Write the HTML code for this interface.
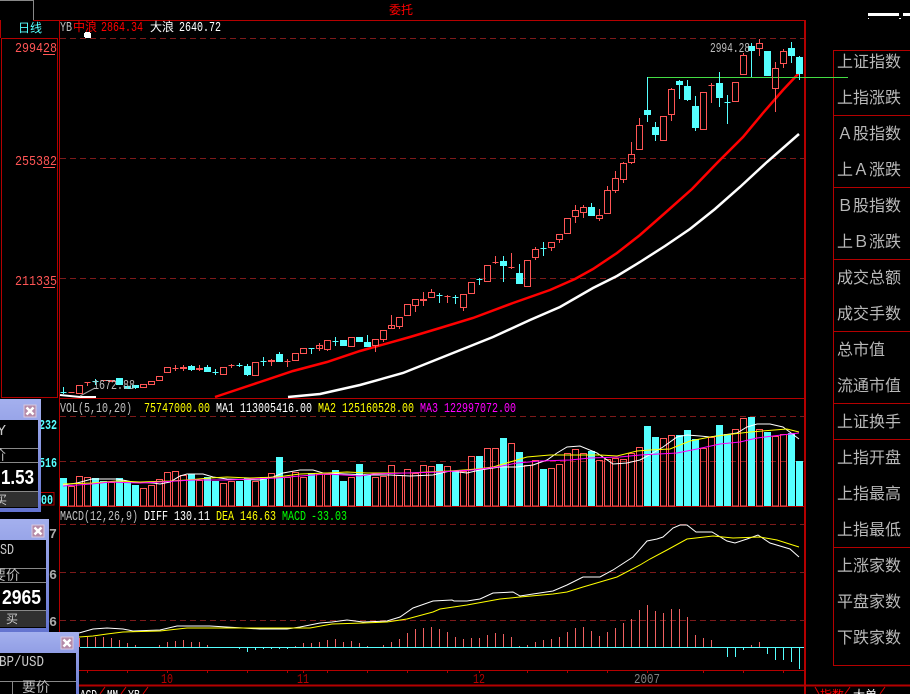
<!DOCTYPE html>
<html><head><meta charset="utf-8"><style>
html,body{margin:0;padding:0;background:#000;width:910px;height:694px;overflow:hidden}
svg{display:block}
text{font-family:"Liberation Mono",monospace;font-size:14px}
.c{font-family:"WenQuanYi Zen Hei","Liberation Sans","Noto Sans CJK SC",sans-serif}
.p{font-family:"WenQuanYi Zen Hei","Liberation Sans","Noto Sans CJK SC",sans-serif;font-size:16px;fill:#b8b8b8}
</style></head><body>
<svg width="910" height="694" viewBox="0 0 910 694" xmlns="http://www.w3.org/2000/svg">
<defs><linearGradient id="g" x1="0" y1="0" x2="0" y2="1"><stop offset="0" stop-color="#a4b0ee"/><stop offset="1" stop-color="#6474d0"/></linearGradient></defs>
<rect width="910" height="694" fill="#000"/>
<g fill="none" stroke="#b40000" shape-rendering="crispEdges">
<path d="M0 .5H33.5V20" stroke="#888"/>
<path d="M33 20.5H806M59.5 20V670M60 398.5H806M60 506.5H806M60 670.5H806M.5 20V38"/>
<path d="M805 20V694" stroke-width="2"/><path d="M0 685.5H910" stroke-width="2"/>
<rect x="1.5" y="38.5" width="56" height="359"/>
<path d="M833.5 50V665.5H910M833 50.5H910M833 115.5H910M833 187.5H910M833 259.5H910M833 331.5H910M833 403.5H910M833 439.5H910M833 547.5H910"/>
<path d="M87.5 671v2M127.5 671v2M167.5 671v2M207.5 671v2M247.5 671v2M287.5 671v2M303.5 671v2M327.5 671v2M367.5 671v2M407.5 671v2M447.5 671v2M479.5 671v2M527.5 671v2M567.5 671v2M607.5 671v2M647.5 671v2M703.5 671v2M743.5 671v2M783.5 671v2"/>
</g>
<g stroke="#7d1a1a" stroke-dasharray="6 4" shape-rendering="crispEdges">
<path d="M60 38.5H805M60 158.5H805M60 278.5H805M60 416.5H805M60 461.5H805M60 524.5H805M60 572.5H805M60 620.5H805"/>
</g>
<!-- MA lines main -->
<polyline fill="none" stroke="#fff" stroke-width="2.5" points="288,397 320,394 360,385 403,373 443,357 493,337 530,320 560,307 593,288 617,276 640,262 665,246 690,229 715,209 740,187 767,162 799,134"/>
<polyline fill="none" stroke="#fff" stroke-width="2" points="60,395 80,397 96,397"/>
<polyline fill="none" stroke="#f00" stroke-width="2.5" points="215,397 260,382 293,371 327,362 360,351 410,337 440,328 473,318 513,303 550,290 575,279 593,269 617,253 640,235 665,213 692,189 717,163 743,137 763,113 783,90 799,73"/>
<path d="M647 77.5H848" stroke="#44dd44" shape-rendering="crispEdges"/>
<path d="M80 396L95 388" stroke="#999" fill="none"/>
<!-- red candles -->
<path fill="none" stroke="#ff5555" shape-rendering="crispEdges" d="M68.5 392.5h6M76.5 385.5h6v8h-6zM84.5 382.5h6M87.5 382v4M100.5 380.5h6M108.5 380.5h6v1h-6zM140.5 384.5h6v3h-6zM148.5 381.5h6v3h-6zM156.5 376.5h6v4h-6zM164.5 367.5h6v5h-6zM172.5 368.5h6M175.5 365v6M180.5 367.5h6v1h-6zM183.5 365v6M196.5 368.5h6v1h-6zM199.5 365v6M220.5 367.5h6v7h-6zM228.5 365.5h6M231.5 364v4M252.5 362.5h6v13h-6zM268.5 360.5h6v1h-6zM271.5 359v7M284.5 361.5h6M287.5 359v8M292.5 353.5h6v7h-6zM300.5 348.5h6v5h-6zM303.5 353v1M316.5 345.5h6v3h-6zM319.5 343v8M324.5 340.5h6v9h-6zM327.5 349v2M348.5 337.5h6v9h-6zM372.5 339.5h6v6h-6zM375.5 345v7M380.5 330.5h6v9h-6zM383.5 339v3M388.5 325.5h6v3h-6zM391.5 315v14M396.5 317.5h6v9h-6zM399.5 326v3M404.5 304.5h6v11h-6zM412.5 299.5h6v6h-6zM415.5 305v7M420.5 299.5h6v1h-6zM423.5 292v14M428.5 292.5h6v5h-6zM431.5 289v3M444.5 296.5h6M447.5 295v8M460.5 294.5h6v13h-6zM463.5 307v4M468.5 282.5h6v11h-6zM484.5 265.5h6v16h-6zM492.5 262.5h6M495.5 256v8M508.5 267.5h6M511.5 253v16M524.5 260.5h6v26h-6zM532.5 249.5h6v8h-6zM535.5 247v2M535.5 257v3M548.5 242.5h6v5h-6zM551.5 247v4M556.5 234.5h6v5h-6zM559.5 239v4M564.5 218.5h6v15h-6zM572.5 210.5h6v6h-6zM575.5 205v5M575.5 216v7M580.5 207.5h6v5h-6zM583.5 205v2M583.5 212v6M596.5 215.5h6v3h-6zM599.5 209v6M599.5 218v3M604.5 190.5h6v23h-6zM607.5 186v4M612.5 178.5h6v12h-6zM615.5 171v7M615.5 190v3M620.5 163.5h6v16h-6zM623.5 162v1M623.5 179v4M628.5 154.5h6v8h-6zM631.5 142v12M631.5 162v2M636.5 125.5h6v24h-6zM639.5 118v7M660.5 116.5h6v24h-6zM668.5 89.5h6v25h-6zM671.5 88v1M671.5 114v7M700.5 92.5h6v37h-6zM708.5 85.5h6M711.5 83v20M732.5 82.5h6v19h-6zM740.5 55.5h6v19h-6zM743.5 53v2M756.5 43.5h6v5h-6zM759.5 39v4M759.5 48v8M772.5 68.5h6v20h-6zM775.5 62v6M775.5 88v24M780.5 51.5h6v12h-6zM783.5 49v2M783.5 63v5"/>
<!-- cyan candles -->
<path fill="#55ffff" stroke="#55ffff" shape-rendering="crispEdges" d="M60.5 392.5h6M63.5 387v7M92.5 381.5h6M95.5 379v6M116.5 378.5h6v6h-6zM124.5 386.5h6v2h-6zM132.5 385.5h6v2h-6zM135.5 385v4M188.5 366.5h6v3h-6zM191.5 365v6M204.5 367.5h6v4h-6zM207.5 365v7M212.5 372.5h6M215.5 369v6M236.5 365.5h6M239.5 363v4M244.5 366.5h6v8h-6zM247.5 364v12M260.5 361.5h6M263.5 357v9M276.5 354.5h6v7h-6zM279.5 352v10M308.5 348.5h6M311.5 348v6M332.5 341.5h6M335.5 337v9M340.5 340.5h6v5h-6zM343.5 340v6M356.5 337.5h6v4h-6zM364.5 342.5h6v4h-6zM367.5 335v12M436.5 295.5h6M439.5 293v10M452.5 297.5h6M455.5 295v9M476.5 279.5h6M479.5 278v7M500.5 261.5h6v4h-6zM503.5 256v26M516.5 273.5h6v10h-6zM519.5 264v20M540.5 248.5h6M543.5 242v14M588.5 207.5h6v8h-6zM591.5 203v13M644.5 110.5h6v4h-6zM647.5 77v45M652.5 127.5h6v7h-6zM655.5 122v19M676.5 81.5h6v3h-6zM679.5 80v19M684.5 86.5h6v13h-6zM687.5 80v21M692.5 106.5h6v21h-6zM695.5 96v35M716.5 83.5h6v14h-6zM719.5 72v35M724.5 102.5h6M727.5 95v29M748.5 46.5h6v4h-6zM751.5 43v34M764.5 51.5h6v24h-6zM788.5 48.5h6v7h-6zM791.5 42v21M796.5 57.5h6v16h-6zM799.5 56v24"/>
<!-- volume bars -->
<path fill="none" stroke="#ff5555" shape-rendering="crispEdges" d="M68.5 486.5h6V506h-6zM76.5 476.5h6V506h-6zM84.5 477.5h6V506h-6zM108.5 482.5h6V506h-6zM140.5 488.5h6V506h-6zM148.5 485.5h6V506h-6zM156.5 479.5h6V506h-6zM164.5 472.5h6V506h-6zM172.5 471.5h6V506h-6zM180.5 475.5h6V506h-6zM196.5 480.5h6V506h-6zM220.5 483.5h6V506h-6zM228.5 481.5h6V506h-6zM252.5 481.5h6V506h-6zM268.5 473.5h6V506h-6zM284.5 477.5h6V506h-6zM292.5 472.5h6V506h-6zM300.5 477.5h6V506h-6zM316.5 474.5h6V506h-6zM324.5 474.5h6V506h-6zM348.5 477.5h6V506h-6zM372.5 477.5h6V506h-6zM380.5 476.5h6V506h-6zM388.5 465.5h6V506h-6zM396.5 475.5h6V506h-6zM404.5 469.5h6V506h-6zM412.5 473.5h6V506h-6zM420.5 465.5h6V506h-6zM428.5 466.5h6V506h-6zM444.5 466.5h6V506h-6zM460.5 471.5h6V506h-6zM468.5 456.5h6V506h-6zM484.5 448.5h6V506h-6zM492.5 448.5h6V506h-6zM508.5 443.5h6V506h-6zM524.5 465.5h6V506h-6zM532.5 460.5h6V506h-6zM548.5 468.5h6V506h-6zM556.5 464.5h6V506h-6zM564.5 453.5h6V506h-6zM572.5 449.5h6V506h-6zM580.5 453.5h6V506h-6zM596.5 460.5h6V506h-6zM604.5 459.5h6V506h-6zM612.5 458.5h6V506h-6zM620.5 459.5h6V506h-6zM628.5 453.5h6V506h-6zM636.5 447.5h6V506h-6zM660.5 438.5h6V506h-6zM668.5 435.5h6V506h-6zM700.5 448.5h6V506h-6zM708.5 437.5h6V506h-6zM732.5 429.5h6V506h-6zM740.5 418.5h6V506h-6zM756.5 429.5h6V506h-6zM772.5 436.5h6V506h-6zM780.5 434.5h6V506h-6z"/>
<path fill="none" stroke="#55ffff" stroke-width="7" shape-rendering="crispEdges" d="M63.5 478V506M95.5 478V506M103.5 481V506M119.5 478V506M127.5 482V506M135.5 485V506M191.5 474V506M207.5 477V506M215.5 481V506M239.5 481V506M247.5 478V506M263.5 477V506M279.5 457V506M311.5 473V506M335.5 470V506M343.5 481V506M359.5 464V506M367.5 474V506M439.5 464V506M455.5 471V506M479.5 456V506M503.5 438V506M519.5 452V506M543.5 469V506M591.5 451V506M647.5 426V506M655.5 437V506M679.5 435V506M687.5 430V506M695.5 439V506M719.5 425V506M727.5 434V506M751.5 417V506M767.5 432V506M791.5 433V506M799.5 461V506"/>
<!-- vol MAs -->
<polyline fill="none" stroke="#fff" points="63,485 77,483 92,479 117,479 133,482 153,483 160,484 170,482 180,476 187,474 203,474 213,477 227,479 260,480 273,477 283,473 300,470 313,470 323,473 347,474 367,475 390,475 410,476 433,475 450,471 467,473 480,470 500,467 517,467 533,465 547,460 557,453 567,447 580,446 597,453 613,464 627,463 640,460 653,453 663,447 677,437 687,435 700,436 710,437 723,435 737,433 747,427 757,424 770,424 783,427 799,439"/>
<polyline fill="none" stroke="#ff0" points="63,484 92,483 117,481 140,482 170,481 187,480 210,478 227,477 250,478 277,477 300,474 327,473 347,472 367,473 390,473 410,473 427,472 450,471 477,469 493,467 510,462 527,457 550,455 600,455 617,456 637,451 650,450 670,449 690,441 710,437 733,434 750,432 787,429 799,432"/>
<polyline fill="none" stroke="#f0f" points="63,486 92,484 110,482 140,483 160,482 193,480 227,480 277,478 300,476 327,474 360,476 373,474 407,473 440,472 473,470 497,467 517,463 540,461 570,460 590,458 620,457 640,455 677,453 697,449 720,444 740,442 757,438 773,436 799,433"/>
<!-- macd hist -->
<path stroke="#55ffff" shape-rendering="crispEdges" d="M80 647.5H804M239.5 647v2M247.5 647v5M255.5 647v3M263.5 647v2M271.5 647v2M279.5 647v2M287.5 647v2M727.5 647v10M735.5 647v10M743.5 647v3M767.5 647v7M775.5 647v13M783.5 647v13M791.5 647v15M799.5 647v22"/>
<path stroke="#ee6060" shape-rendering="crispEdges" d="M79.5 638V647M87.5 637V647M95.5 637V647M103.5 637V647M111.5 638V647M119.5 640V647M127.5 643V647M135.5 645V647M159.5 645V647M167.5 642V647M175.5 641V647M183.5 640V647M191.5 642V647M199.5 642V647M207.5 645V647M295.5 646V647M303.5 643V647M311.5 643V647M319.5 642V647M327.5 640V647M335.5 639V647M343.5 642V647M351.5 641V647M359.5 643V647M367.5 646V647M383.5 645V647M391.5 642V647M399.5 639V647M407.5 633V647M415.5 629V647M423.5 628V647M431.5 627V647M439.5 629V647M447.5 632V647M455.5 637V647M463.5 639V647M471.5 638V647M479.5 638V647M487.5 635V647M495.5 633V647M503.5 634V647M511.5 637V647M519.5 646V647M527.5 645V647M535.5 642V647M543.5 640V647M551.5 639V647M559.5 637V647M567.5 632V647M575.5 628V647M583.5 627V647M591.5 631V647M599.5 636V647M607.5 632V647M615.5 628V647M623.5 623V647M631.5 619V647M639.5 610V647M647.5 605V647M655.5 611V647M663.5 613V647M671.5 609V647M679.5 609V647M687.5 617V647M695.5 635V647M703.5 638V647M711.5 640V647M751.5 645V647M759.5 642V647"/>
<!-- macd lines -->
<polyline fill="none" stroke="#fff" points="79,633 93,629 107,628 123,629 133,631 160,630 177,626 210,626 243,628 260,629 287,629 300,627 320,623 332,622 347,620 363,622 387,621 400,617 413,608 433,601 452,600 454,601 467,601 480,599 493,593 513,592 520,596 533,594 553,591 567,585 583,577 600,577 613,570 633,557 647,541 657,539 663,537 673,528 680,525 687,525 696,532 712,532 727,541 735,543 747,539 758,535 770,543 790,549 799,557"/>
<polyline fill="none" stroke="#ff0" points="79,637 93,636 107,634 123,632 160,631 187,628 243,628 310,628 332,624 363,623 387,622 407,619 433,612 440,609 467,605 500,599 520,597 553,594 567,592 583,587 600,582 617,577 640,565 650,559 667,550 687,539 713,536 733,538 760,537 777,540 799,547"/>
<!-- labels -->
<text x="389" y="14" class="c" style="font-size:12px" fill="#f00">委托</text>
<text x="18" y="32" class="c" style="font-size:12px" fill="#55ffff">日线</text>
<g fill="#ff5555"><text x="15" y="52" textLength="42" lengthAdjust="spacingAndGlyphs">299428</text><text x="15" y="165" textLength="42" lengthAdjust="spacingAndGlyphs">255382</text><text x="15" y="285" textLength="42" lengthAdjust="spacingAndGlyphs">211335</text></g>
<path d="M43 54.5H55M43 167.5H55M43 287.5H55" stroke="#ff5555" shape-rendering="crispEdges"/>
<text x="60" y="31" textLength="12" lengthAdjust="spacingAndGlyphs" fill="#c0c0c0">YB</text>
<text x="73" y="31" class="c" style="font-size:12px" fill="#f00">中浪</text>
<text x="101" y="31" textLength="42" lengthAdjust="spacingAndGlyphs" fill="#f00">2864.34</text>
<text x="150" y="31" class="c" style="font-size:12px" fill="#fff">大浪</text>
<text x="179" y="31" textLength="42" lengthAdjust="spacingAndGlyphs" fill="#fff">2640.72</text>
<path d="M85 32h5v1h1v5h-1v0h-5v-1h-1v-4h1z" fill="#fff"/>
<text x="710" y="52" textLength="40" lengthAdjust="spacingAndGlyphs" fill="#bbb">2994.28</text>
<text x="93" y="389" textLength="42" lengthAdjust="spacingAndGlyphs" fill="#bbb">1672.88</text>
<text x="60" y="412" textLength="72" lengthAdjust="spacingAndGlyphs" fill="#c0c0c0">VOL(5,10,20)</text>
<text x="144" y="412" textLength="66" lengthAdjust="spacingAndGlyphs" fill="#ff0">75747000.00</text>
<text x="216" y="412" textLength="18" lengthAdjust="spacingAndGlyphs" fill="#fff">MA1</text>
<text x="240" y="412" textLength="72" lengthAdjust="spacingAndGlyphs" fill="#fff">113005416.00</text>
<text x="318" y="412" textLength="18" lengthAdjust="spacingAndGlyphs" fill="#ff0">MA2</text>
<text x="342" y="412" textLength="72" lengthAdjust="spacingAndGlyphs" fill="#ff0">125160528.00</text>
<text x="420" y="412" textLength="18" lengthAdjust="spacingAndGlyphs" fill="#f0f">MA3</text>
<text x="444" y="412" textLength="72" lengthAdjust="spacingAndGlyphs" fill="#f0f">122997072.00</text>
<text x="60" y="520" textLength="78" lengthAdjust="spacingAndGlyphs" fill="#c0c0c0">MACD(12,26,9)</text>
<text x="144" y="520" textLength="24" lengthAdjust="spacingAndGlyphs" fill="#fff">DIFF</text>
<text x="174" y="520" textLength="36" lengthAdjust="spacingAndGlyphs" fill="#fff">130.11</text>
<text x="216" y="520" textLength="18" lengthAdjust="spacingAndGlyphs" fill="#ff0">DEA</text>
<text x="240" y="520" textLength="36" lengthAdjust="spacingAndGlyphs" fill="#ff0">146.63</text>
<text x="282" y="520" textLength="24" lengthAdjust="spacingAndGlyphs" fill="#0f0">MACD</text>
<text x="311" y="520" textLength="36" lengthAdjust="spacingAndGlyphs" fill="#0f0">-33.03</text>
<g fill="#b40000"><text x="161" y="683" textLength="12" lengthAdjust="spacingAndGlyphs">10</text><text x="297" y="683" textLength="12" lengthAdjust="spacingAndGlyphs">11</text><text x="473" y="683" textLength="12" lengthAdjust="spacingAndGlyphs">12</text></g>
<text x="634" y="683" textLength="26" lengthAdjust="spacingAndGlyphs" fill="#808080">2007</text>
<!-- bottom tabs -->
<g fill="#fff"><text x="80" y="699" textLength="17" lengthAdjust="spacingAndGlyphs">ACD</text><text x="107" y="699" textLength="11" lengthAdjust="spacingAndGlyphs">MM</text><text x="128" y="699" textLength="12" lengthAdjust="spacingAndGlyphs">YB</text></g>
<path d="M100 694L105 687M121 694L126 687M143 694L148 687M815 687L819 694M845 694L850 687M880 694L885 687" stroke="#d00" fill="none"/>
<text x="820" y="699" class="c" style="font-size:12px" fill="#f00">指数</text>
<text x="853" y="699" class="c" style="font-size:12px" fill="#fff">大单</text>
<!-- right panel text -->
<text x="837" y="67" class="p">上证指数</text><text x="837" y="103" class="p">上指涨跌</text>
<text x="837" y="139" class="p">Ａ股指数</text><text x="837" y="175" class="p">上Ａ涨跌</text>
<text x="837" y="211" class="p">Ｂ股指数</text><text x="837" y="247" class="p">上Ｂ涨跌</text>
<text x="837" y="283" class="p">成交总额</text><text x="837" y="319" class="p">成交手数</text>
<text x="837" y="355" class="p">总市值</text><text x="837" y="391" class="p">流通市值</text>
<text x="837" y="427" class="p">上证换手</text><text x="837" y="463" class="p">上指开盘</text>
<text x="837" y="499" class="p">上指最高</text><text x="837" y="535" class="p">上指最低</text>
<text x="837" y="571" class="p">上涨家数</text><text x="837" y="607" class="p">平盘家数</text>
<text x="837" y="643" class="p">下跌家数</text>
<path d="M868 13h31v3h-31zM903 13h7v3h-7zM868 18h1v1h-1zM899 18h2v1h-2z" fill="#fff"/>
<!-- axis leftovers -->
<g fill="#55ffff" font-weight="bold"><text x="39" y="429" textLength="18" lengthAdjust="spacingAndGlyphs">232</text><text x="39" y="467" textLength="18" lengthAdjust="spacingAndGlyphs">516</text></g>
<rect x="40" y="492.500" width="14" height="12.500" fill="#000" stroke="#b40000"/>
<text x="41" y="504" textLength="12" lengthAdjust="spacingAndGlyphs" fill="#55ffff" font-weight="bold">00</text>
<g fill="#aaa" font-weight="bold"><text x="49" y="538" textLength="8" lengthAdjust="spacingAndGlyphs">7</text><text x="49" y="579" textLength="8" lengthAdjust="spacingAndGlyphs">6</text><text x="49" y="626" textLength="8" lengthAdjust="spacingAndGlyphs">6</text></g>
<!-- window 1 -->
<rect x="-10" y="399" width="51" height="113" fill="url(#g)"/>
<rect x="-10" y="420" width="48" height="88" fill="#000"/>
<path d="M-10 448.500H38M-10 462.500H38M-10 491.500H38" stroke="#888" shape-rendering="crispEdges"/>
<rect x="-10" y="492" width="48" height="15" fill="#303030"/>
<rect x="24" y="405" width="12" height="12" fill="#b58aa8" stroke="#d8c8e0"/>
<path d="M26.500 407.500L33.500 414.500M33.500 407.500L26.500 414.500" stroke="#fff" stroke-width="2.500"/>
<text x="-3" y="435" fill="#ccc" style="font-size:15px">Y</text>
<text x="-8" y="460" class="c" style="font-size:14px" fill="#bbb">价</text>
<text x="1" y="484" textLength="33" lengthAdjust="spacingAndGlyphs" fill="#fff" style="font-family:'Liberation Sans';font-weight:bold;font-size:20px">1.53</text>
<text x="-5" y="504" class="c" style="font-size:12px" fill="#ccc">买</text>
<!-- window 2 -->
<rect x="-10" y="519" width="59" height="113" fill="url(#g)"/>
<rect x="-10" y="540" width="56" height="88" fill="#000"/>
<path d="M-10 568.500H46M-10 582.500H46M-10 610.500H46" stroke="#888" shape-rendering="crispEdges"/>
<rect x="-10" y="611" width="56" height="16" fill="#303030"/>
<rect x="32" y="525" width="12" height="12" fill="#b58aa8" stroke="#d8c8e0"/>
<path d="M34.500 527.500L41.500 534.500M41.500 527.500L34.500 534.500" stroke="#fff" stroke-width="2.500"/>
<text x="0" y="554" textLength="14" lengthAdjust="spacingAndGlyphs" fill="#ccc" style="font-size:15px">SD</text>
<text x="-8" y="580" class="c" style="font-size:14px" fill="#bbb">要价</text>
<text x="2" y="604" textLength="39" lengthAdjust="spacingAndGlyphs" fill="#fff" style="font-family:'Liberation Sans';font-weight:bold;font-size:20px">2965</text>
<text x="6" y="623" class="c" style="font-size:12px" fill="#ccc">买</text>
<!-- window 3 -->
<rect x="-10" y="632" width="89" height="70" fill="url(#g)"/>
<rect x="-10" y="653" width="86" height="50" fill="#000"/>
<path d="M-10 681.500H76M12.500 681V694" stroke="#888" shape-rendering="crispEdges"/>
<rect x="61" y="637" width="12" height="12" fill="#b58aa8" stroke="#d8c8e0"/>
<path d="M63.500 639.500L70.500 646.500M70.500 639.500L63.500 646.500" stroke="#fff" stroke-width="2.500"/>
<text x="-1" y="666" textLength="45" lengthAdjust="spacingAndGlyphs" fill="#ccc" style="font-size:15px">BP/USD</text>
<text x="22" y="692" class="c" style="font-size:14px" fill="#bbb">要价</text>
</svg>
</body></html>
